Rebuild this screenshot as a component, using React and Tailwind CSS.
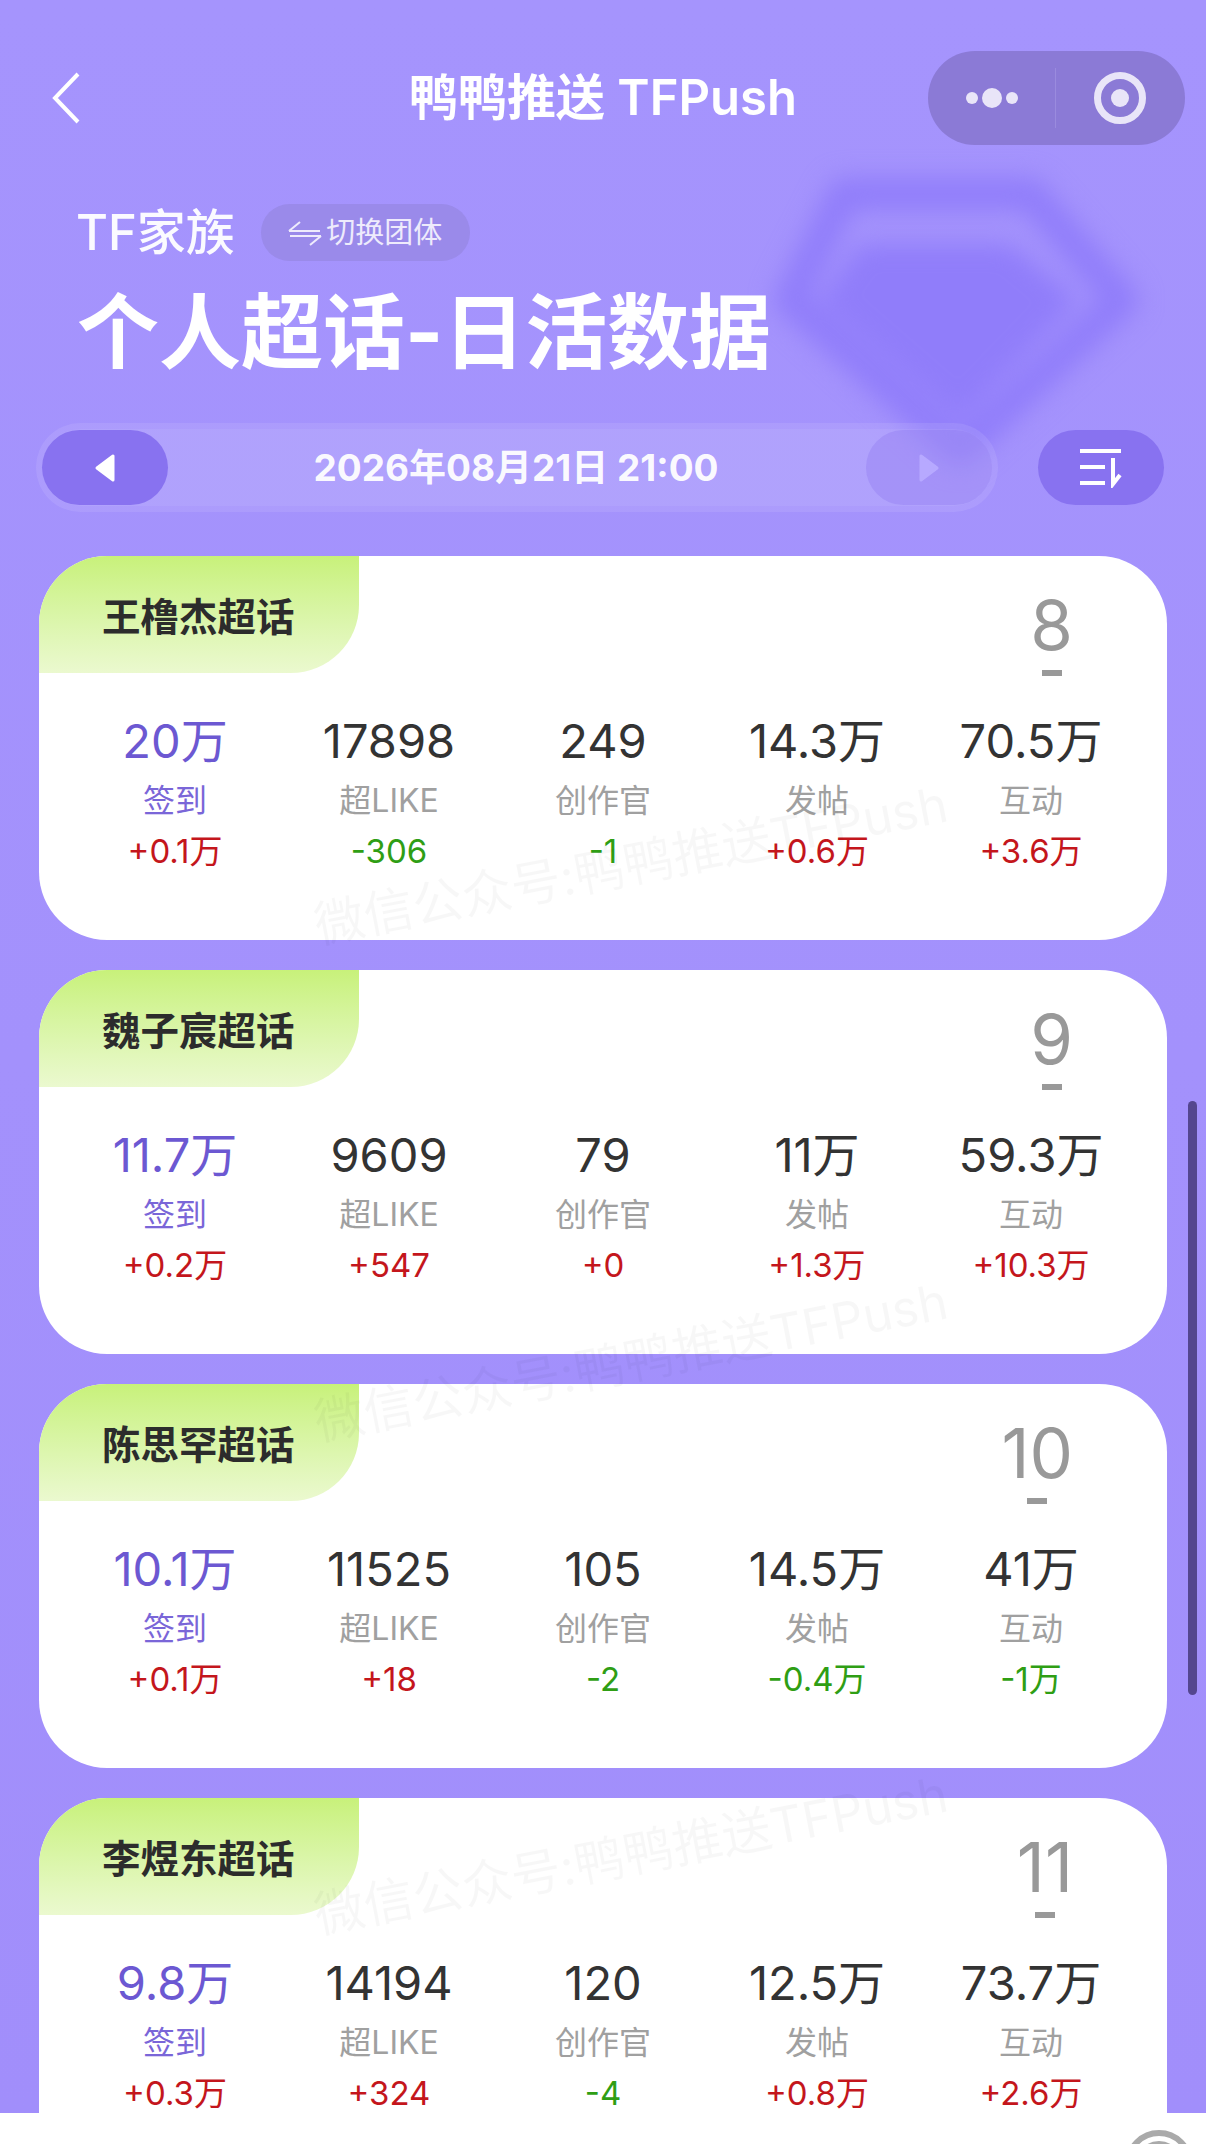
import React from 'react'

const cards = [
  {
    name: '王橹杰超话', rank: '8',
    stats: [['20万', '+0.1万'], ['17898', '-306'], ['249', '-1'], ['14.3万', '+0.6万'], ['70.5万', '+3.6万']],
  },
  {
    name: '魏子宸超话', rank: '9',
    stats: [['11.7万', '+0.2万'], ['9609', '+547'], ['79', '+0'], ['11万', '+1.3万'], ['59.3万', '+10.3万']],
  },
  {
    name: '陈思罕超话', rank: '10',
    stats: [['10.1万', '+0.1万'], ['11525', '+18'], ['105', '-2'], ['14.5万', '-0.4万'], ['41万', '-1万']],
  },
  {
    name: '李煜东超话', rank: '11',
    stats: [['9.8万', '+0.3万'], ['14194', '+324'], ['120', '-4'], ['12.5万', '+0.8万'], ['73.7万', '+2.6万']],
  },
]

const labels = ['签到', '超LIKE', '创作官', '发帖', '互动']

function Stat({ value, label, delta, first }) {
  return (
    <div className="flex flex-col items-center">
      <div className={`text-[47px] leading-[56px] ${first ? 'text-[#6c58d2]' : 'text-[#333333]'}`}>{value}</div>
      <div className={`mt-[10px] text-[32px] leading-[44px] ${first ? 'text-[#7a66d8]' : 'text-[#a0a0a0]'}`}>{label}</div>
      <div className={`mt-[8px] text-[33px] leading-[40px] ${delta[0] === '-' ? 'text-[#2f9e14]' : 'text-[#c4161c]'}`}>{delta}</div>
    </div>
  )
}

function Card({ card }) {
  return (
    <div className="w-[1128px] h-[384px] mx-[39px] mb-[30px] shrink-0 bg-white rounded-[68px] overflow-hidden">
      <div className="flex justify-between items-start">
        <div className="w-[320px] h-[117px] pl-[63px] pt-[6px] flex items-center rounded-br-[68px] bg-gradient-to-b from-[#c8f17a] to-[#ebf9cf]">
          <span className="text-[38.5px] font-semibold text-[#2c2c2c]">{card.name}</span>
        </div>
        <div className="mr-[94px] mt-[35px] flex flex-col items-center text-[#999999]">
          <div className="text-[69px] leading-[68px]">{card.rank}</div>
          <div className="w-[20px] h-[6px] mt-[11px] bg-[#999999]"></div>
        </div>
      </div>
      <div className="grid grid-cols-5 px-[29px] pt-[37px]">
        {card.stats.map((s, i) => (
          <Stat key={labels[i]} value={s[0]} delta={s[1]} label={labels[i]} first={i === 0} />
        ))}
      </div>
    </div>
  )
}

export default function App() {
  return (
    <div className="relative w-[1206px] h-[2144px] overflow-hidden flex flex-col bg-white font-['Inter','Noto_Sans_CJK_SC',sans-serif]">
      <div className="relative flex-1 min-h-0 overflow-hidden bg-gradient-to-b from-[#a594fd] to-[#a18efb]">
        {/* blurred gem behind the header */}
        <svg className="absolute left-[760px] top-[160px] w-[400px] h-[310px] blur-[12px]" viewBox="0 0 400 310" fill="none">
          <path d="M84 34H270L362 140L200 290L30 140Z" stroke="#907dfa" strokeWidth="32" strokeLinejoin="round" />
          <path d="M100 84H250L318 140L200 262L60 140Z" fill="#907dfa" />
        </svg>

        <div className="relative">
          {/* nav bar */}
          <div className="mt-[51px] h-[94px] grid grid-cols-[1fr_auto_1fr] items-center">
            <div className="pl-[52px]">
              <svg className="w-[28px] h-[52px]" viewBox="0 0 28 52" fill="none">
                <path d="M26 2L3 26L26 50" stroke="white" strokeWidth="4" />
              </svg>
            </div>
            <div className="text-[49px] font-semibold text-white">鸭鸭推送 TFPush</div>
            <div className="justify-self-end mr-[21px] w-[257px] h-[94px] rounded-full bg-[#8b7ad6] flex items-center">
              <div className="w-[128px] h-[60px] flex items-center justify-center gap-[4px] border-r border-[#9a8bde]">
                <span className="w-[12px] h-[12px] rounded-full bg-[#e9e5f8]"></span>
                <span className="w-[20px] h-[20px] rounded-full bg-[#e9e5f8]"></span>
                <span className="w-[12px] h-[12px] rounded-full bg-[#e9e5f8]"></span>
              </div>
              <div className="flex-1 flex justify-center pr-[2px]">
                <div className="w-[52px] h-[52px] rounded-full border-[7px] border-[#e9e5f8] flex items-center justify-center">
                  <span className="w-[18px] h-[18px] rounded-full bg-[#e9e5f8]"></span>
                </div>
              </div>
            </div>
          </div>

          {/* heading */}
          <div className="mt-[59px] ml-[76px] flex items-center h-[57px]">
            <span className="text-[49px] font-medium text-white/95">TF家族</span>
            <div className="ml-[26px] w-[209px] h-[57px] rounded-full bg-[#9a8aea] flex items-center justify-center gap-[4px] text-[#eeebfc]">
              <svg className="w-[34px] h-[26px]" viewBox="0 0 34 26" fill="none" stroke="currentColor" strokeWidth="2">
                <path d="M1 11H32M1 11L12 2" />
                <path d="M2 16H33M33 16L22 25" />
              </svg>
              <span className="text-[29px]">切换团体</span>
            </div>
          </div>
          <div className="mt-[27px] ml-[77px] text-[82px] leading-[90px] font-bold text-white">个人超话-日活数据</div>

          {/* date switcher */}
          <div className="mt-[45px] ml-[36px] flex items-center gap-[40px]">
            <div className="w-[962px] h-[89px] rounded-full border-[6px] border-white/[0.09] bg-white/[0.14] bg-clip-padding flex items-center justify-between">
              <div className="w-[126px] h-[75px] rounded-full bg-[#8872f0] flex items-center justify-center">
                <svg className="w-[22px] h-[30px]" viewBox="0 0 22 30">
                  <path d="M19 3V27L3 15Z" fill="white" stroke="white" strokeWidth="3" strokeLinejoin="round" />
                </svg>
              </div>
              <div className="text-[37px] font-bold text-white/95 pt-[1px] pr-[2px]">2026年08月21日 21:00</div>
              <div className="w-[126px] h-[75px] rounded-full bg-[#8872f0]/30 flex items-center justify-center">
                <svg className="w-[22px] h-[30px]" viewBox="0 0 22 30">
                  <path d="M3 3V27L19 15Z" fill="#b7a9ff" stroke="#b7a9ff" strokeWidth="3" strokeLinejoin="round" />
                </svg>
              </div>
            </div>
            <div className="w-[126px] h-[75px] rounded-full bg-[#8872f0] flex items-center justify-center">
              <svg className="w-[44px] h-[40px]" viewBox="0 0 44 40" fill="none" stroke="white" strokeWidth="4">
                <path d="M1 3H42M1 19H26M1 35H26" />
                <path d="M34 10V36L41 27" />
              </svg>
            </div>
          </div>

          {/* ranking cards */}
          <div className="mt-[44px] flex flex-col">
            {cards.map((card) => (
              <Card key={card.name} card={card} />
            ))}
          </div>
        </div>

        {/* watermark over the page */}
        <div className="absolute left-[631px] top-[865px] -translate-x-1/2 -translate-y-1/2 -rotate-[11deg] whitespace-nowrap text-[50px] text-black/[0.03] pointer-events-none">微信公众号:鸭鸭推送TFPush</div>
        <div className="absolute left-[631px] top-[1362px] -translate-x-1/2 -translate-y-1/2 -rotate-[11deg] whitespace-nowrap text-[50px] text-black/[0.03] pointer-events-none">微信公众号:鸭鸭推送TFPush</div>
        <div className="absolute left-[631px] top-[1855px] -translate-x-1/2 -translate-y-1/2 -rotate-[11deg] whitespace-nowrap text-[50px] text-black/[0.03] pointer-events-none">微信公众号:鸭鸭推送TFPush</div>

        {/* scrollbar */}
        <div className="absolute left-[1188px] top-[1101px] w-[9px] h-[594px] rounded-full bg-[#54468f]"></div>
      </div>

      {/* bottom strip */}
      <div className="relative h-[31px] shrink-0 bg-white overflow-hidden">
        <svg className="absolute left-[1124px] top-[16px] w-[70px] h-[70px]" viewBox="0 0 70 70" fill="none" stroke="#aaaaaa" strokeWidth="6">
          <circle cx="35" cy="35" r="31" />
          <circle cx="35" cy="35" r="20" />
        </svg>
      </div>
    </div>
  )
}
